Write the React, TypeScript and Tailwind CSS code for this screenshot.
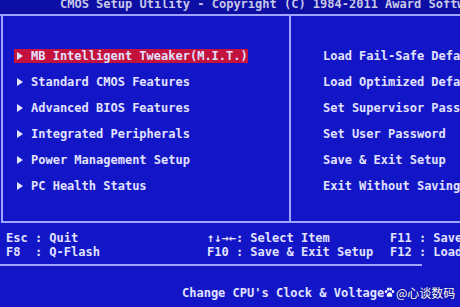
import React from 'react';

const leftItems = [
  'MB Intelligent Tweaker(M.I.T.)',
  'Standard CMOS Features',
  'Advanced BIOS Features',
  'Integrated Peripherals',
  'Power Management Setup',
  'PC Health Status',
];

const rightItems = [
  'Load Fail-Safe Defaults',
  'Load Optimized Defaults',
  'Set Supervisor Password',
  'Set User Password',
  'Save & Exit Setup',
  'Exit Without Saving',
];

function Arrow() {
  return (
    <svg width="6" height="8" viewBox="0 0 6 8" className="shrink-0">
      <path d="M0 0 L6 4 L0 8 Z" fill="#e4e4ff" />
    </svg>
  );
}

export default function App() {
  return (
    <div
      className="relative w-[460px] h-[307px] overflow-hidden bg-[#1216c6] text-[#e2e2ff] text-[12px] font-bold whitespace-pre"
      style={{ fontFamily: '"DejaVu Sans Mono", "Liberation Mono", monospace' }}
    >
      {/* Title */}
      <div className="h-[14px] overflow-hidden bg-[#0c0ea4] pl-[60px]">
        <div className="leading-[14px] -mt-[3px] text-[#c8c8e8]">CMOS Setup Utility - Copyright (C) 1984-2011 Award Software</div>
      </div>
      <div className="h-[2px] bg-[#9ea4ff]" />

      {/* Menu panels */}
      <div className="flex h-[207px] border-l-2 border-b-2 border-[#9ea4ff] ml-[1px]">
        <div className="w-[288px] shrink-0 border-r-2 border-[#9ea4ff] pt-[33px] pl-[11px] flex flex-col gap-[12px]">
          {leftItems.map((t, i) => (
            <div
              key={t}
              className={`flex items-center h-[14px] leading-[14px] w-[234px] pl-[3px] gap-[8px] ${i === 0 ? 'bg-[#c4123e]' : ''}`}
            >
              <Arrow />
              <span>{t}</span>
            </div>
          ))}
        </div>
        <div className="flex-1 min-w-0 pt-[33px] pl-[32px] flex flex-col gap-[12px]">
          {rightItems.map((t) => (
            <div key={t} className="h-[14px] leading-[14px]">{t}</div>
          ))}
        </div>
      </div>

      {/* Key help */}
      <div className="flex h-[41px] pt-[8px] leading-[14px]">
        <div className="w-[207px] shrink-0 pl-[6px]">
          <div>Esc : Quit</div>
          <div>F8  : Q-Flash</div>
        </div>
        <div className="w-[183px] shrink-0">
          <div>↑↓→←: Select Item</div>
          <div>F10 : Save & Exit Setup</div>
        </div>
        <div className="shrink-0">
          <div>F11 : Save CMOS to BIOS</div>
          <div>F12 : Load CMOS from BIOS</div>
        </div>
      </div>
      <div className="h-[2px] w-[422px] bg-[#9ea4ff]" />

      {/* Item help */}
      <div className="pl-[182px] pt-[20px] leading-[14px]">Change CPU's Clock & Voltage</div>

      {/* Watermark */}
      <div
        className="absolute left-[384px] top-[285px] flex items-center gap-[1px] text-white font-normal text-[12px] leading-[15px] [text-shadow:0_0_2px_rgba(0,0,0,0.6)]"
        style={{ fontFamily: '"Noto Sans CJK SC", "Noto Sans", sans-serif' }}
      >
        <svg width="11" height="11" viewBox="0 0 16 16">
          <ellipse cx="3" cy="6.5" rx="1.8" ry="2.3" fill="#fff" />
          <ellipse cx="6.2" cy="3" rx="1.8" ry="2.3" fill="#fff" />
          <ellipse cx="9.8" cy="3" rx="1.8" ry="2.3" fill="#fff" />
          <ellipse cx="13" cy="6.5" rx="1.8" ry="2.3" fill="#fff" />
          <path d="M8 7.5 C5.5 7.5 3.5 11 4 13 C4.5 15 7 14 8 14 C9 14 11.5 15 12 13 C12.5 11 10.5 7.5 8 7.5 Z" fill="#fff" />
        </svg>
        <span>@心谈数码</span>
      </div>
    </div>
  );
}
